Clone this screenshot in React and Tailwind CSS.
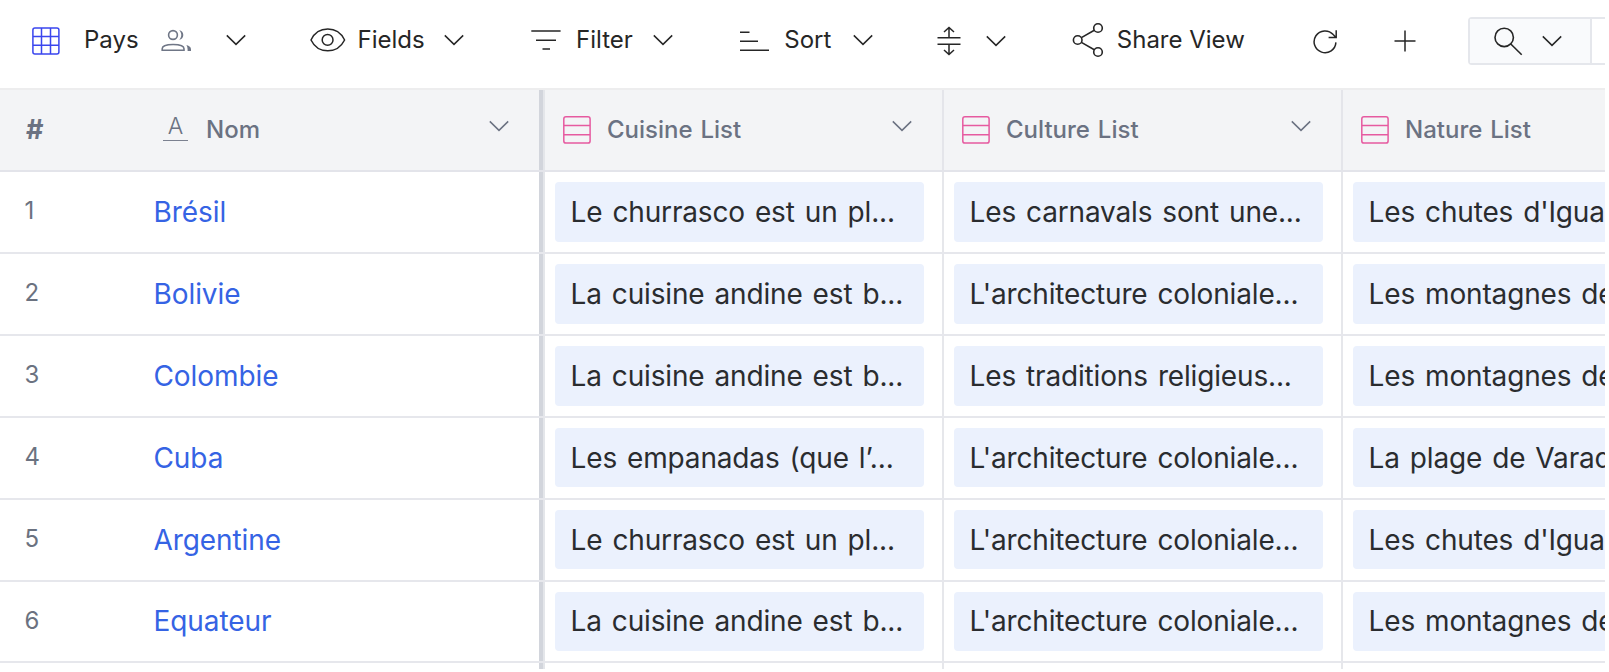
import React from "react";

const ROWS = [
  [1, "Brésil", "Le churrasco est un pl...", "Les carnavals sont une...", "Les chutes d'Iguazu"],
  [2, "Bolivie", "La cuisine andine est b...", "L'architecture coloniale...", "Les montagnes des Andes"],
  [3, "Colombie", "La cuisine andine est b...", "Les traditions religieus...", "Les montagnes des Andes"],
  [4, "Cuba", "Les empanadas (que l’...", "L'architecture coloniale...", "La plage de Varadero"],
  [5, "Argentine", "Le churrasco est un pl...", "L'architecture coloniale...", "Les chutes d'Iguazu"],
  [6, "Equateur", "La cuisine andine est b...", "L'architecture coloniale...", "Les montagnes des Andes"],
];

function Svg({ w, h, className = "", sw = 1.5, children }) {
  return (
    <svg
      width={w}
      height={h}
      viewBox={`0 0 ${w} ${h}`}
      fill="none"
      stroke="currentColor"
      strokeWidth={sw}
      className={`shrink-0 ${className}`}
    >
      {children}
    </svg>
  );
}

function Chevron({ className = "" }) {
  return (
    <Svg w={20} h={12} className={className}>
      <path d="M0.8 1.4 L10 10.4 L19.2 1.4" />
    </Svg>
  );
}

function GridIcon() {
  return (
    <Svg w={28} h={28} sw={1.5} className="ml-8 mt-0.5 text-[#3a46ee]">
      <rect x="0.9" y="0.9" width="26" height="26" rx="2" />
      <path d="M9.5 1v26M18.5 1v26M1 9.5h26M1 18.3h26" />
    </Svg>
  );
}

function UsersIcon() {
  return (
    <Svg w={31} h={24} sw={1.6} className="ml-[23px] mt-[2px] text-[#6f7686]">
      <circle cx="12" cy="6" r="4.4" />
      <path d="M1.2 21.2v-1.4c0-2.8 5-4.3 10.9-4.3s10.9 1.5 10.9 4.3v1.4z" />
      <path d="M18.2 1.2c2.5 .3 4.1 2.3 4.1 4.8s-1.6 4.5-4.1 4.8c2.8-2.7 2.8-6.9 0-9.6z" fill="currentColor" stroke="none" />
      <path d="M25.4 16.1c3 .9 4.6 2.2 4.6 4.3v1.6h-3.4v-1.8c0-1.6-.4-2.9-1.2-4.1z" fill="currentColor" stroke="none" />
    </Svg>
  );
}

function EyeIcon() {
  return (
    <Svg w={36} h={24} className="ml-[64px] mt-px">
      <path d="M1 12C4.5 4.7 10.5 1.1 17.8 1.1S31 4.7 34.6 12C31 19.2 25.1 22.8 17.8 22.8S4.5 19.2 1 12Z" strokeLinejoin="round" />
      <circle cx="17.6" cy="11.9" r="5.4" />
    </Svg>
  );
}

function FilterIcon() {
  return (
    <Svg w={30} h={20} className="ml-[67px]">
      <path d="M0.3 1h29.3M5 10.2h20M11.5 19h7.5" />
    </Svg>
  );
}

function SortIcon() {
  return (
    <Svg w={30} h={20} className="ml-[67px] mt-[3px]">
      <path d="M0 1.2h9.5M0 10.2h18M0 19.2h29" />
    </Svg>
  );
}

function RowHeightIcon() {
  return (
    <Svg w={24} h={30} className="ml-[64px] mt-[3px]">
      <path d="M0.5 11.8h23M0.5 18.2h23M12 1.6v10M12 18.4v10M7 6l5-4.6L17 6M7 24l5 4.6L17 24" />
    </Svg>
  );
}

function ShareIcon() {
  return (
    <Svg w={32} h={36} sw={1.6} className="ml-[66px] mt-px">
      <circle cx="26" cy="6" r="4.3" />
      <circle cx="5.7" cy="18" r="4.3" />
      <circle cx="26" cy="30" r="4.3" />
      <path d="M9.4 15.6L22.3 8.3M9.4 20.4L22.3 27.7" />
    </Svg>
  );
}

function RefreshIcon() {
  return (
    <Svg w={25} h={25} sw={1.5} className="ml-[68px] mt-[3px]">
      <path d="M22.9 13.4A10.9 10.9 0 1 1 20.2 5.6L22.9 8.4M23.2 1.2v7.2h-7.6" />
    </Svg>
  );
}

function PlusIcon() {
  return (
    <Svg w={22} h={22} className="ml-[56px] mt-[3px]">
      <path d="M0.5 11h21M11 0.5v21" />
    </Svg>
  );
}

function SearchIcon() {
  return (
    <Svg w={29} h={29} sw={1.6} className="ml-[24px] mt-px">
      <circle cx="10.2" cy="10.4" r="9.2" />
      <path d="M16.8 17L27.7 27.7" />
    </Svg>
  );
}

function LinkIcon() {
  return (
    <Svg w={28} h={28} sw={1.5} className="ml-[18px] text-[#e65aa0]">
      <rect x="0.8" y="0.8" width="26.3" height="26.3" rx="2.2" />
      <path d="M1 9.5h26M1 18.7h26" />
    </Svg>
  );
}

function Toolbar() {
  return (
    <div className="flex h-[88px] w-[1700px] shrink-0 items-center pb-[9px] text-2xl text-[#262626]">
      <GridIcon />
      <span className="ml-6 w-[54px]">Pays</span>
      <UsersIcon />
      <Chevron className="ml-[33.5px] mt-px" />
      <EyeIcon />
      <span className="ml-[12px] w-[67px]">Fields</span>
      <Chevron className="ml-[19.5px] mt-px" />
      <FilterIcon />
      <span className="ml-[15px] w-[57px]">Filter</span>
      <Chevron className="ml-[20.5px] mt-px" />
      <SortIcon />
      <span className="ml-[14px] w-[47px]">Sort</span>
      <Chevron className="ml-[21.5px] mt-px" />
      <RowHeightIcon />
      <Chevron className="ml-[25px] mt-[3px]" />
      <ShareIcon />
      <span className="ml-[13px] w-[128px] whitespace-nowrap">Share View</span>
      <RefreshIcon />
      <PlusIcon />
      <div className="ml-[52px] mt-[3px] flex h-12 w-[300px] items-stretch rounded border-2 border-[#e5e7ec]">
        <div className="flex w-[122px] items-center border-r-2 border-[#e5e7ec] bg-[#f9fafc]">
          <SearchIcon />
          <Chevron className="ml-[19px]" />
        </div>
      </div>
    </div>
  );
}

function ColumnHeader({ label }) {
  return (
    <div className="flex w-[399px] shrink-0 items-center border-r-2 border-[#e4e5ea]">
      <LinkIcon />
      <span className="ml-4 w-[285px] whitespace-nowrap [word-spacing:1.5px]">{label}</span>
      <Chevron className="-mt-2" />
    </div>
  );
}

function Cell({ text }) {
  return (
    <div className="flex w-[399px] shrink-0 items-center border-r-2 border-[#e6e7eb] pl-2.5">
      <div className="flex h-[59.6px] w-[369px] items-center overflow-hidden whitespace-nowrap rounded bg-[#ebf1fd] pl-[15.6px] tracking-[-0.16px] text-[#2a2c2f] [word-spacing:2.3px]">
        {text}
      </div>
    </div>
  );
}

function FrozenEdge() {
  return <div className="ml-auto w-1.5 shrink-0 border-r-2 border-[#e4e6ea] bg-[#d2d5dc]" />;
}

export default function App() {
  return (
    <div className="h-[672px] w-[1609px] overflow-hidden bg-white font-['Inter','Liberation_Sans',sans-serif]">
      <div className="flex h-[669px] w-[1604.5px] flex-col overflow-hidden">
        <Toolbar />
        <div className="flex h-[84px] w-[1742px] shrink-0 border-b-2 border-t-2 border-b-[#e3e4ea] border-t-[#ededee] bg-[#f3f4f6] text-2xl font-medium text-[#6b7282]">
          <div className="flex w-[545px] shrink-0">
            <span className="flex w-[163px] items-center pl-[26px] text-[27px] font-bold">#</span>
            <span className="mt-[25px] h-[25.5px] w-[25px] border-b-[1.5px] border-[#7b8190] text-center text-[23px] font-light leading-[22px]">A</span>
            <span className="-mt-px ml-[18px] flex w-[283px] items-center">Nom</span>
            <span className="flex items-center">
              <Chevron className="-mt-2" />
            </span>
            <FrozenEdge />
          </div>
          <ColumnHeader label="Cuisine List" />
          <ColumnHeader label="Culture List" />
          <ColumnHeader label="Nature List" />
        </div>
        {ROWS.map(([n, name, cuisine, culture, nature]) => (
          <div key={n} className="flex h-[81.92px] w-[1742px] shrink-0 border-b-2 border-[#e6e7ec] text-[28px]">
            <div className="flex w-[545px] shrink-0">
              <span className="flex w-[153.5px] items-center pb-px pl-[24.6px] text-2xl text-[#6b7280]">{n}</span>
              <span className="flex items-center tracking-[-0.08px] text-[#3563e4]">{name}</span>
              <FrozenEdge />
            </div>
            <Cell text={cuisine} />
            <Cell text={culture} />
            <Cell text={nature} />
          </div>
        ))}
        <div className="flex h-10 w-[1742px] shrink-0">
          <div className="flex w-[545px] shrink-0">
            <FrozenEdge />
          </div>
          <div className="w-[399px] shrink-0 border-r-2 border-[#e6e7eb]" />
          <div className="w-[399px] shrink-0 border-r-2 border-[#e6e7eb]" />
        </div>
      </div>
    </div>
  );
}
